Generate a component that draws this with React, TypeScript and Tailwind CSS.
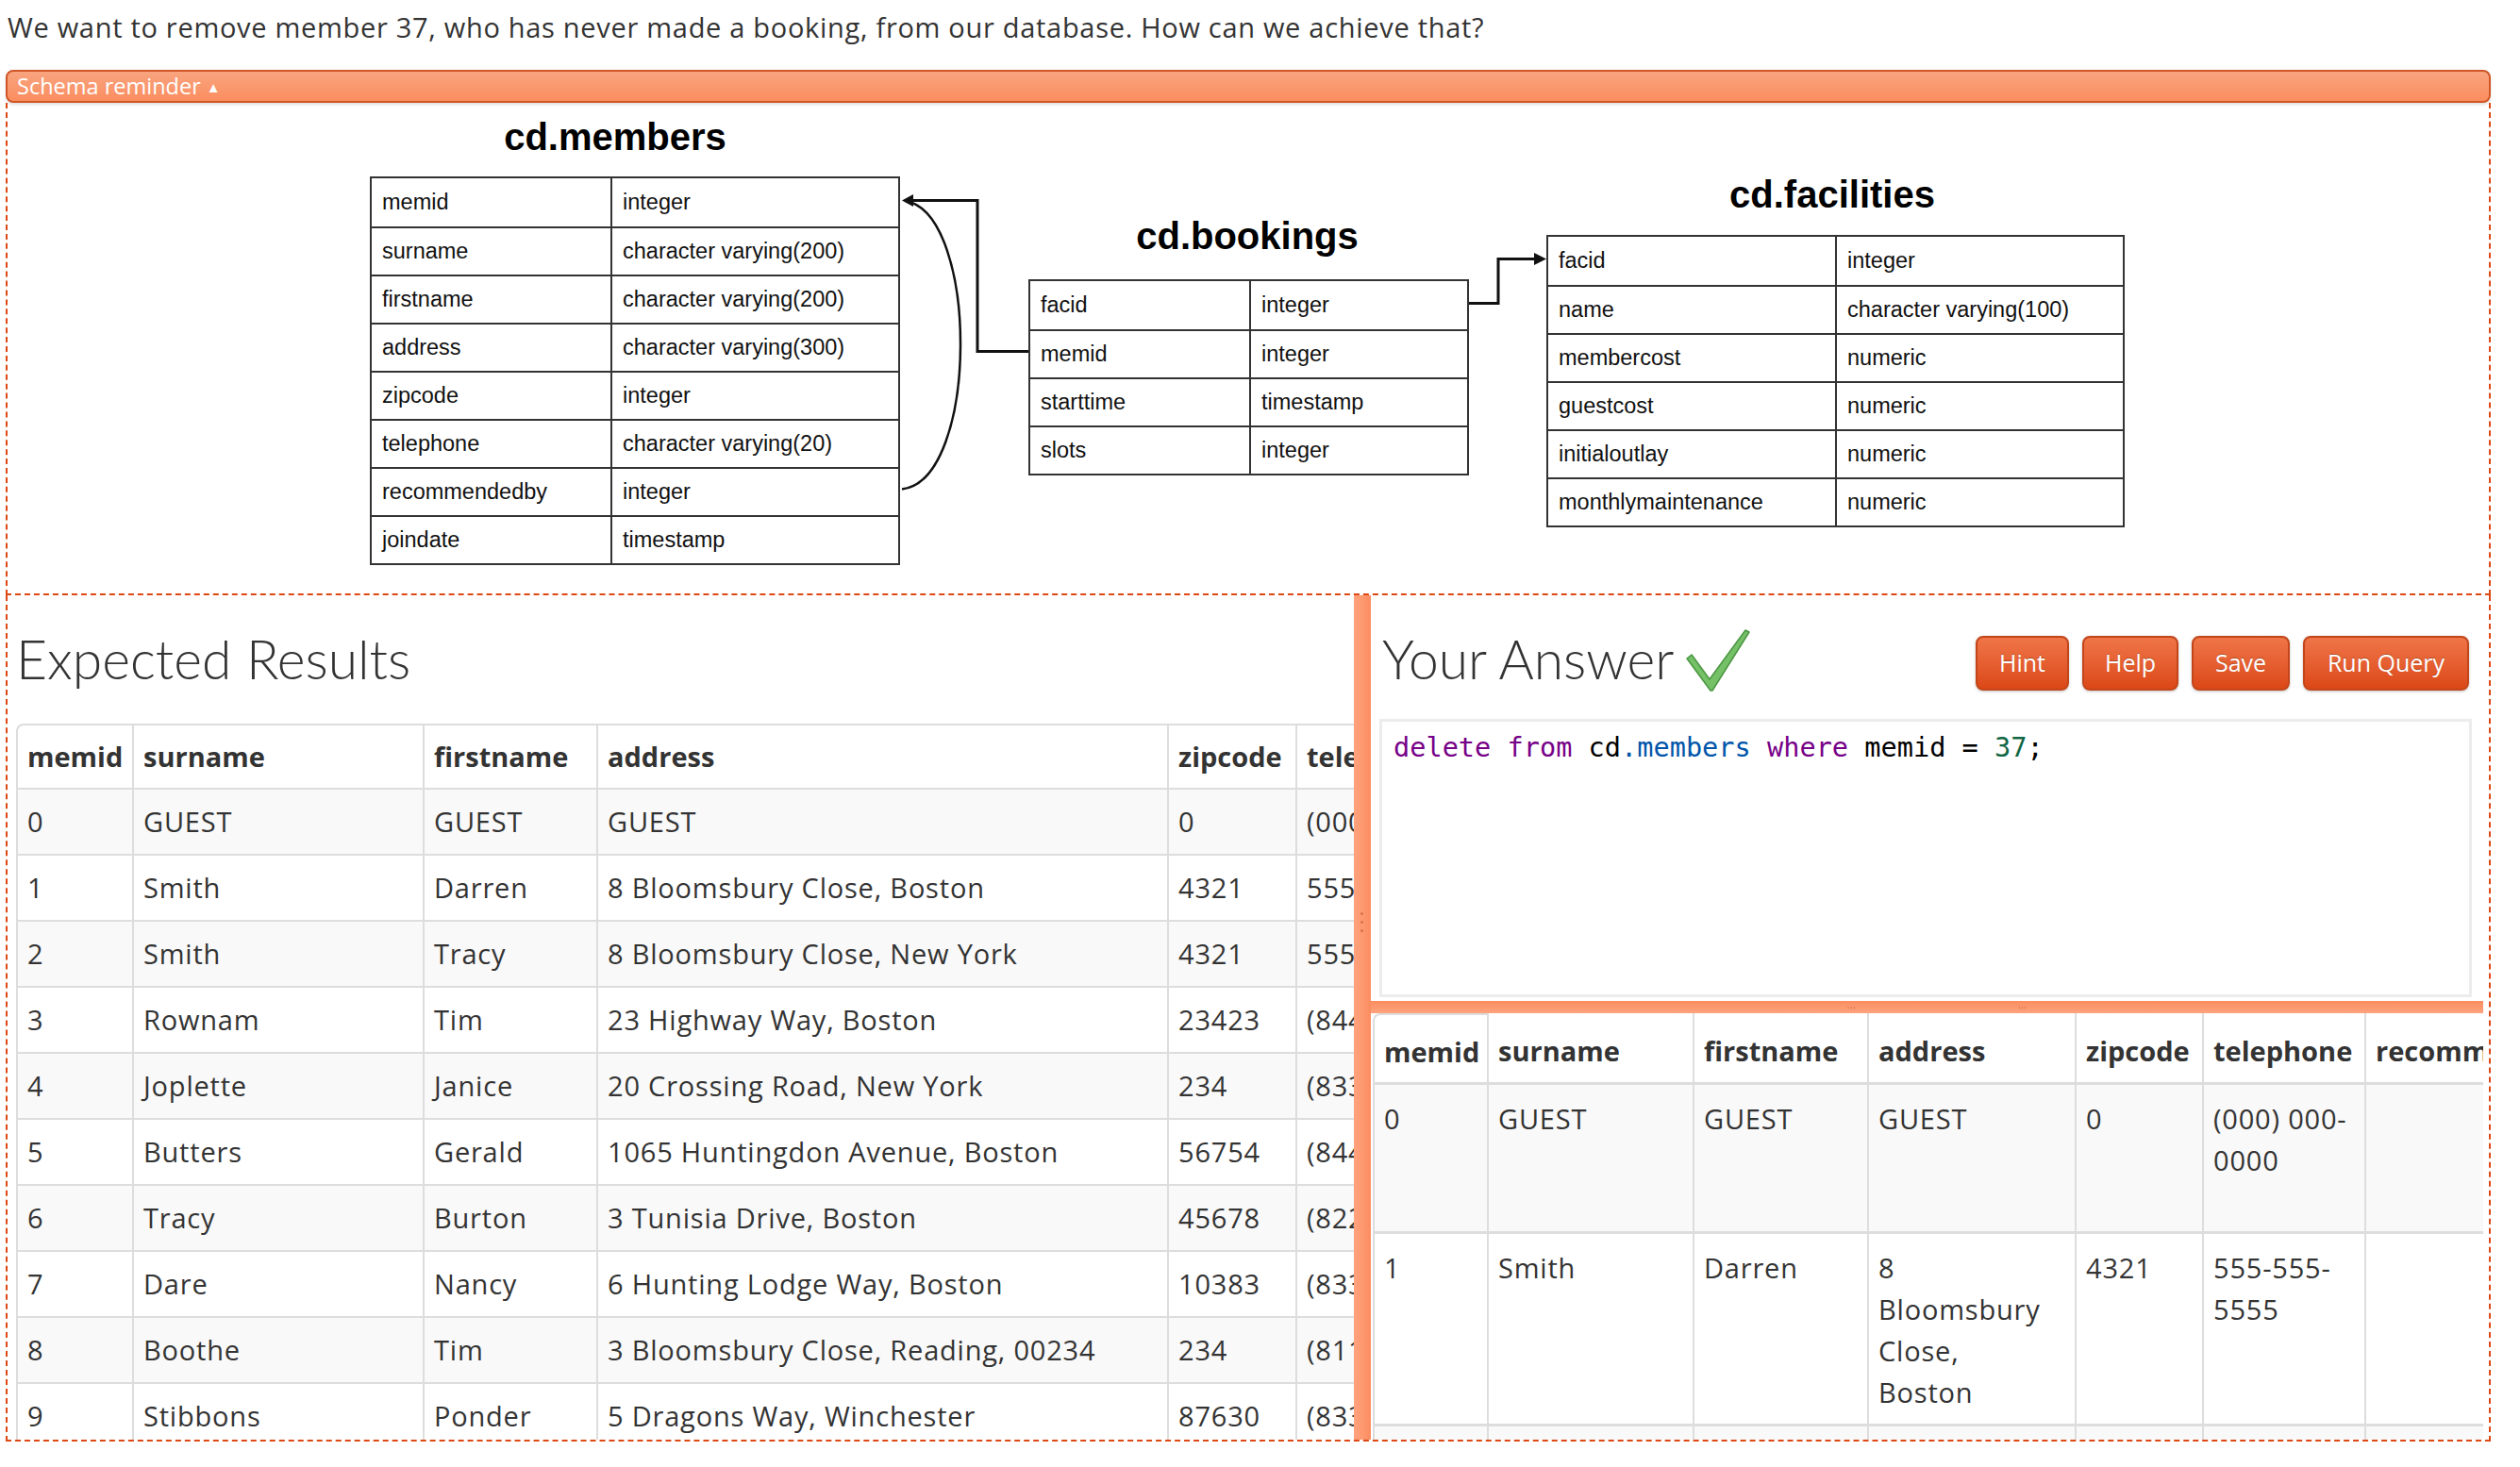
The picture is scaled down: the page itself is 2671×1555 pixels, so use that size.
import React from 'react'

const membersCols = [
  ['memid', 'integer'],
  ['surname', 'character varying(200)'],
  ['firstname', 'character varying(200)'],
  ['address', 'character varying(300)'],
  ['zipcode', 'integer'],
  ['telephone', 'character varying(20)'],
  ['recommendedby', 'integer'],
  ['joindate', 'timestamp'],
]

const bookingsCols = [
  ['facid', 'integer'],
  ['memid', 'integer'],
  ['starttime', 'timestamp'],
  ['slots', 'integer'],
]

const facilitiesCols = [
  ['facid', 'integer'],
  ['name', 'character varying(100)'],
  ['membercost', 'numeric'],
  ['guestcost', 'numeric'],
  ['initialoutlay', 'numeric'],
  ['monthlymaintenance', 'numeric'],
]

const members = [
  ['0', 'GUEST', 'GUEST', 'GUEST', '0', '(000) 000-0000', '', '2012-07-01 00:00:00'],
  ['1', 'Smith', 'Darren', '8 Bloomsbury Close, Boston', '4321', '555-555-5555', '', '2012-07-02 12:02:05'],
  ['2', 'Smith', 'Tracy', '8 Bloomsbury Close, New York', '4321', '555-555-5555', '', '2012-07-02 12:08:23'],
  ['3', 'Rownam', 'Tim', '23 Highway Way, Boston', '23423', '(844) 693-0723', '', '2012-07-03 09:32:15'],
  ['4', 'Joplette', 'Janice', '20 Crossing Road, New York', '234', '(833) 942-4710', '1', '2012-07-03 10:25:05'],
  ['5', 'Butters', 'Gerald', '1065 Huntingdon Avenue, Boston', '56754', '(844) 078-4130', '1', '2012-07-09 10:44:09'],
  ['6', 'Tracy', 'Burton', '3 Tunisia Drive, Boston', '45678', '(822) 354-9973', '', '2012-07-15 08:52:55'],
  ['7', 'Dare', 'Nancy', '6 Hunting Lodge Way, Boston', '10383', '(833) 776-4001', '4', '2012-07-25 08:59:12'],
  ['8', 'Boothe', 'Tim', '3 Bloomsbury Close, Reading, 00234', '234', '(811) 433-2547', '3', '2012-07-25 16:02:35'],
  ['9', 'Stibbons', 'Ponder', '5 Dragons Way, Winchester', '87630', '(833) 160-3900', '6', '2012-07-25 17:09:05'],
]

const heads = ['memid', 'surname', 'firstname', 'address', 'zipcode', 'telephone', 'recommendedby', 'joindate']

function SchemaTable({ title, rows, x, y, w, split, titleX, titleTop }: {
  title: string
  rows: string[][]
  x: number
  y: number
  w: number
  split: number
  titleX: number
  titleTop: number
}) {
  return (
    <>
      <div
        className="absolute w-[400px] text-center text-[40px] leading-[46px] font-bold text-black"
        style={{ left: titleX - 200, top: titleTop }}
      >
        {title}
      </div>
      <div className="absolute border-2 border-[#333] bg-white" style={{ left: x, top: y, width: w }}>
        {rows.map((r, i) => (
          <div key={i} className={`flex h-[51px] ${i > 0 ? 'border-t-2 border-[#333]' : ''}`}>
            <div className="flex items-center pl-[11px] border-r-2 border-[#333]" style={{ width: split }}>
              {r[0]}
            </div>
            <div className="flex items-center pl-[11px]">{r[1]}</div>
          </div>
        ))}
      </div>
    </>
  )
}

function Schema() {
  return (
    <div className="relative h-[522px] border-x-2 border-b-2 border-dashed border-[#dd4814] font-['Liberation_Sans',Arial,sans-serif] text-[23.5px] text-[#111] tracking-normal">
      <SchemaTable title="cd.members" rows={membersCols} x={384} y={78} w={562} split={255} titleX={644} titleTop={13} />
      <SchemaTable title="cd.bookings" rows={bookingsCols} x={1082} y={187} w={467} split={234} titleX={1314} titleTop={118} />
      <SchemaTable title="cd.facilities" rows={facilitiesCols} x={1631} y={140} w={613} split={306} titleX={1934} titleTop={74} />
      <svg className="absolute left-0 top-0" width="2630" height="520" fill="none">
        <path d="M1082 263.5 H1028 V103.5 H958" stroke="#111" strokeWidth="3" />
        <path d="M948 103.5 L960 97 L960 110 Z" fill="#111" />
        <path d="M948 409.5 C1030 400 1030 118 952 104" stroke="#111" strokeWidth="2.5" />
        <path d="M1549 212.5 H1580 V165.5 H1620" stroke="#111" strokeWidth="3" />
        <path d="M1631 165.5 L1618 159 L1618 172 Z" fill="#111" />
      </svg>
    </div>
  )
}

function Checkmark() {
  return (
    <svg width="70" height="68" viewBox="0 0 70 68">
      <path
        d="M2 32 L7 28 L26 54 L64 2 L68 4 L29 66 L27 66 Z"
        fill="#74c168"
        stroke="#4b9641"
        strokeWidth="1.5"
        strokeLinejoin="round"
      />
    </svg>
  )
}

function Btn({ label, w }: { label: string; w: string }) {
  return (
    <button
      className={`${w} h-[58px] rounded-[8px] border-2 border-[#c2461a] bg-gradient-to-b from-[#ef7547] to-[#dc4716] text-white text-[25px] tracking-normal shadow-[0_1px_3px_rgba(0,0,0,0.25)] [text-shadow:0_-1px_0_rgba(0,0,0,0.25)]`}
    >
      {label}
    </button>
  )
}

function Lines({ v }: { v: string | string[] }) {
  if (typeof v === 'string') return <>{v}</>
  return (
    <>
      {v.map((l, i) => (
        <div key={i}>{l}</div>
      ))}
    </>
  )
}

export default function App() {
  const leftWidths = [123, 308, 184, 605, 136, 240, 240, 330]
  const leftTotal = leftWidths.reduce((a, b) => a + b, 0)
  const rightWidths = [121, 218, 185, 220, 135, 172, 200, 260]
  const rightTotal = rightWidths.reduce((a, b) => a + b, 0)

  const rightRows: (string | string[])[][] = [
    ['0', 'GUEST', 'GUEST', 'GUEST', '0', ['(000) 000-', '0000'], '', ['2012-07-01', '00:00:00']],
    ['1', 'Smith', 'Darren', ['8', 'Bloomsbury', 'Close,', 'Boston'], '4321', ['555-555-', '5555'], '', ['2012-07-02', '12:02:05']],
    ['2', 'Smith', 'Tracy', ['8', 'Bloomsbury', 'Close, New', 'York'], '4321', ['555-555-', '5555'], '', ''],
  ]
  const rightHeights = ['h-[158px]', 'h-[204px]', 'h-[204px]']

  return (
    <div className="w-[2671px] h-[1555px] overflow-hidden bg-white font-['Open_Sans',sans-serif] tracking-[0.8px] text-[#333]">
      <p className="pl-[8px] pt-[9px] h-[74px] text-[29px] leading-[40px] tracking-[0.7px]">
        We want to remove member 37, who has never made a booking, from our database. How can we achieve that?
      </p>

      <div className="ml-[6px] w-[2634px]">
        <div className="h-[35px] rounded-[8px] border-2 border-[#cf5626] bg-gradient-to-b from-[#f8a47f] to-[#fb8d5f] pl-[10px] text-white text-[23.5px] leading-[30px] tracking-normal shadow-[0_2px_3px_rgba(0,0,0,0.12)]">
          Schema reminder <span className="text-[15px] align-[2px]">▲</span>
        </div>

        <Schema />

        <div className="flex h-[897px] border-x-2 border-b-2 border-dashed border-[#dd4814]">
          {/* expected results */}
          <div className="w-[1427px] overflow-hidden pl-[9px]">
            <h2 className="mt-[35px] h-[64px] font-['Lato',sans-serif] text-[57px] leading-[64px] font-light tracking-normal">
              Expected Results
            </h2>
            <div className="mt-[37px] w-[2200px]">
              <table
                className="table-fixed border-separate border-spacing-0 text-[29px] leading-[44px]"
                style={{ width: leftTotal }}
              >
                <colgroup>
                  {leftWidths.map((w, i) => (
                    <col key={i} style={{ width: w }} />
                  ))}
                </colgroup>
                <thead>
                  <tr className="h-[68px]">
                    {heads.map((h, i) => (
                      <th
                        key={i}
                        className={`border-t-2 border-l-2 border-[#ddd] px-[10px] text-left font-bold tracking-normal whitespace-nowrap ${i === 0 ? 'rounded-tl-[8px]' : ''}`}
                      >
                        {h}
                      </th>
                    ))}
                  </tr>
                </thead>
                <tbody>
                  {members.map((r, ri) => (
                    <tr key={ri} className={`h-[70px] ${ri % 2 === 0 ? 'bg-[#f9f9f9]' : 'bg-white'}`}>
                      {r.map((c, ci) => (
                        <td key={ci} className="border-t-2 border-l-2 border-[#ddd] px-[10px] whitespace-nowrap">
                          {c}
                        </td>
                      ))}
                    </tr>
                  ))}
                </tbody>
              </table>
            </div>
          </div>

          {/* vertical splitter */}
          <div className="relative w-[18px] bg-gradient-to-r from-[#ffa37e] to-[#fb8d60]">
            <div className="absolute left-[7px] top-[336px] flex flex-col gap-[6px]">
              <span className="block w-[3px] h-[3px] rounded-full bg-[#d9704b]" />
              <span className="block w-[3px] h-[3px] rounded-full bg-[#d9704b]" />
              <span className="block w-[3px] h-[3px] rounded-full bg-[#d9704b]" />
            </div>
          </div>

          {/* your answer */}
          <div className="flex-1 flex flex-col overflow-hidden">
            <div className="pl-[9px] pr-[18px]">
              <div className="mt-[36px] flex h-[65px] justify-between">
                <div className="flex items-start">
                  <h2 className="-mt-[1px] h-[64px] pl-[3px] font-['Lato',sans-serif] text-[57px] leading-[64px] font-light tracking-normal">
                    Your Answer
                  </h2>
                  <div className="ml-[12px] -mt-[1px]">
                    <Checkmark />
                  </div>
                </div>
                <div className="mt-[7px] flex gap-[14px] pr-[3px]">
                  <Btn label="Hint" w="w-[99px]" />
                  <Btn label="Help" w="w-[102px]" />
                  <Btn label="Save" w="w-[104px]" />
                  <Btn label="Run Query" w="w-[176px]" />
                </div>
              </div>
              <div className="mt-[30px] h-[295px] border-[3px] border-[#ececec] bg-white pl-[12px] pt-[7px] font-['DejaVu_Sans_Mono',monospace] text-[28.6px] leading-[40px] tracking-normal text-black">
                <span className="text-[#770088]">delete</span> <span className="text-[#770088]">from</span> cd
                <span className="text-[#0055aa]">.members</span> <span className="text-[#770088]">where</span> memid ={' '}
                <span className="text-[#116644]">37</span>;
              </div>
            </div>

            {/* horizontal splitter */}
            <div className="relative mt-[4px] mr-[6px] h-[18px] bg-gradient-to-b from-[#fb8d60] to-[#ffa37e]">
              <span className="absolute left-[505px] top-[5px] text-[10px] leading-[10px] text-[#d9704b] tracking-[1px]">'''</span>
              <span className="absolute left-[686px] top-[5px] text-[10px] leading-[10px] text-[#d9704b] tracking-[1px]">'''</span>
            </div>

            <div className="ml-[2px] mr-[6px] overflow-hidden">
              <table
                className="table-fixed border-separate border-spacing-0 text-[29px] leading-[44px]"
                style={{ width: rightTotal }}
              >
                <colgroup>
                  {rightWidths.map((w, i) => (
                    <col key={i} style={{ width: w }} />
                  ))}
                </colgroup>
                <thead>
                  <tr className="h-[73px]">
                    {heads.map((h, i) => (
                      <th
                        key={i}
                        className={`border-l-2 border-[#ddd] px-[10px] pt-[7px] text-left font-bold tracking-normal whitespace-nowrap ${i === 0 ? 'rounded-tl-[8px] border-t-2' : ''}`}
                      >
                        {h}
                      </th>
                    ))}
                  </tr>
                </thead>
                <tbody>
                  {rightRows.map((r, ri) => (
                    <tr key={ri} className={`${rightHeights[ri]} ${ri % 2 === 0 ? 'bg-[#f9f9f9]' : 'bg-white'}`}>
                      {r.map((c, ci) => (
                        <td key={ci} className="border-t-[3px] border-l-2 border-[#ddd] px-[10px] pt-[14px] align-top whitespace-nowrap">
                          <Lines v={c} />
                        </td>
                      ))}
                    </tr>
                  ))}
                </tbody>
              </table>
            </div>
          </div>
        </div>
      </div>
    </div>
  )
}
